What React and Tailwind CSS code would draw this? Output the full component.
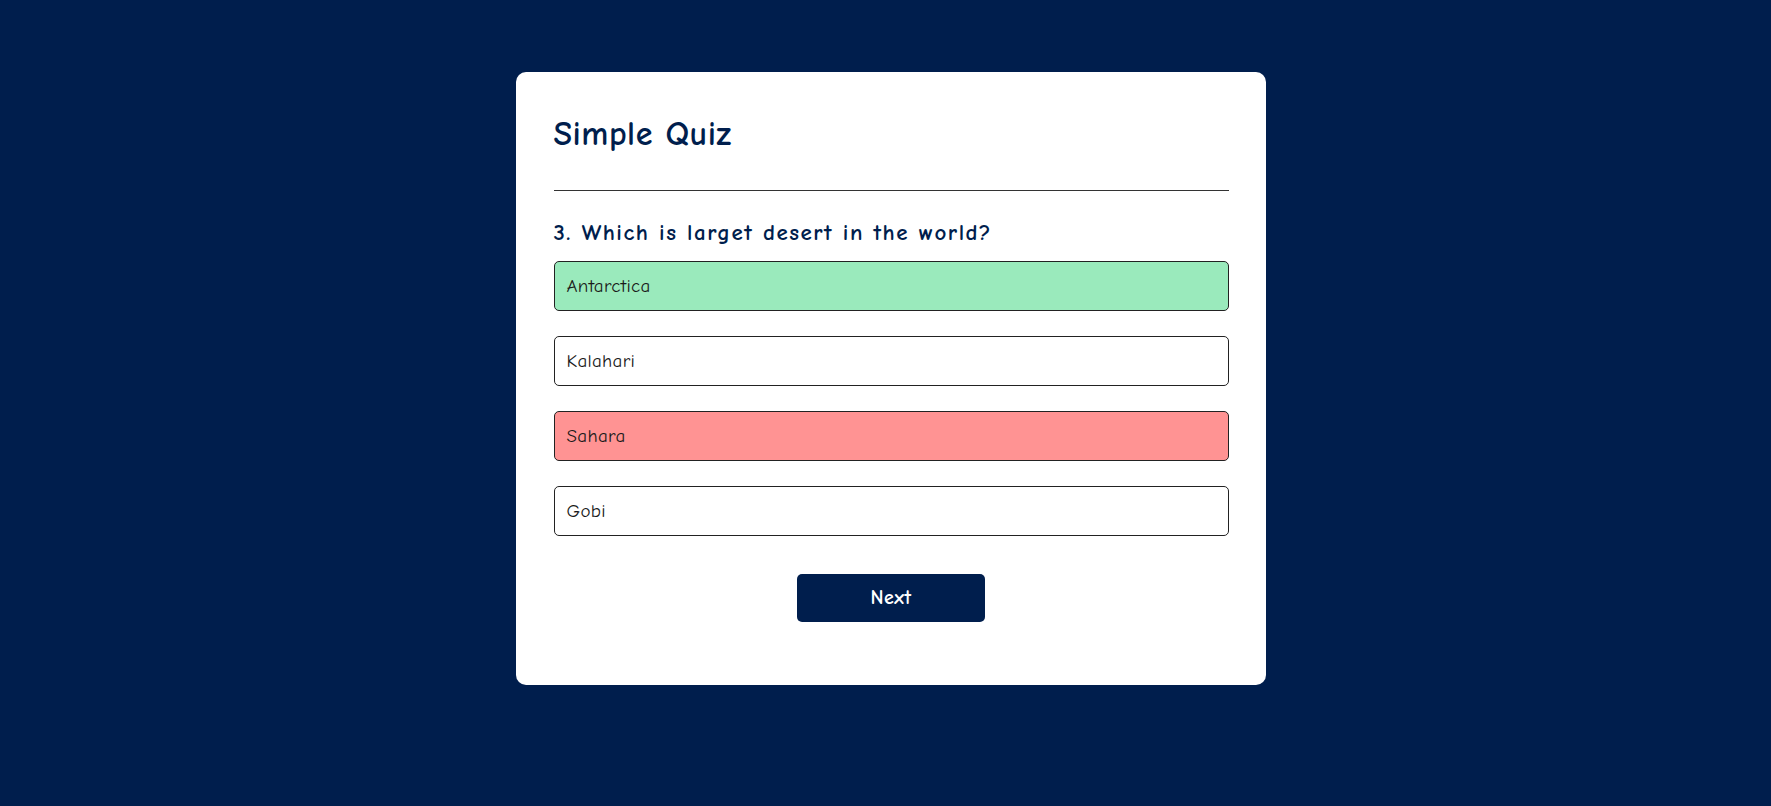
const answers = [
  { text: 'Antarctica', state: 'correct' },
  { text: 'Kalahari', state: 'idle' },
  { text: 'Sahara', state: 'wrong' },
  { text: 'Gobi', state: 'idle' },
]

const stateClass = {
  correct: 'bg-[#9aeabc]',
  wrong: 'bg-[#ff9393]',
  idle: 'bg-white',
}

export default function App() {
  return (
    <div
      className="min-h-screen bg-[#001e4d] pt-[72px] pl-[11px]"
      style={{ fontFamily: '"Comic Sans MS", "Comic Neue", "DejaVu Sans", sans-serif' }}
    >
      <div className="mx-auto w-[750px] rounded-[10px] bg-white px-[37.5px] pt-[37px] pb-[63px]">
        <h1 className="border-b border-[#333] pb-[31px] text-[34px] font-bold leading-[50px] tracking-[0.5px] text-[#001e4d]">
          Simple Quiz
        </h1>

        <div className="pt-[25px]">
          <h2 className="text-[23px] font-bold leading-[34px] tracking-[1.5px] text-[#001e4d]">
            3. Which is larget desert in the world?
          </h2>

          <div className="mt-[11px] flex flex-col gap-[25px]">
            {answers.map((a) => (
              <button
                key={a.text}
                type="button"
                className={`h-[50px] w-full rounded-[5px] border border-[#222] px-[12px] text-left text-[19px] tracking-[0.3px] text-[#1a1a1a] ${stateClass[a.state]}`}
              >
                {a.text}
              </button>
            ))}
          </div>

          <button
            type="button"
            className="mx-auto mt-[38px] block h-[48px] w-[188px] rounded-[5px] bg-[#001e4d] text-[20px] font-bold tracking-[0.5px] text-white"
          >
            Next
          </button>
        </div>
      </div>
    </div>
  )
}
